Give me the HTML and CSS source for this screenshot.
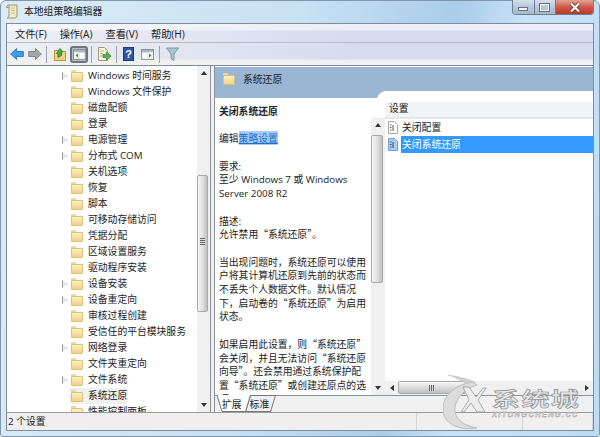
FILE: index.html
```html
<!DOCTYPE html>
<html lang="zh-CN">
<head>
    <meta charset="UTF-8">
    <title>本地组策略编辑器</title>
    <link rel="stylesheet" href="styles.css">
</head>
<body>
    <div class="window">
        <!-- Title bar -->
        <div class="titlebar">
            <svg class="app-icon" width="12" height="15" viewBox="0 0 12 15"><path d="M3 1h8v10c0 1.500-1 3-2 3H1c1 0 2-1 2-3z" fill="#f1e9cc" stroke="#a3956a"/><path d="M3 1C1.500 1 .5 2 .5 3.500H3" fill="#d8cfa8" stroke="#a3956a"/><path d="M5 4h4M5 6.500h4M5 9h4" stroke="#c9bc90"/></svg>
            <span class="title">本地组策略编辑器</span>
            <div class="caption-btns">
                <div class="cap cap-min"><i></i></div>
                <div class="cap cap-max"><i></i></div>
                <div class="cap cap-close">
                    <svg width="14" height="11" viewBox="0 0 14 11"><path d="M3 1.500l8 8M11 1.500l-8 8" stroke="#5a2a20" stroke-width="3.600"/><path d="M3 1.500l8 8M11 1.500l-8 8" stroke="#fff" stroke-width="2.200"/></svg>
                </div>
            </div>
        </div>

        <div class="client">
            <!-- Menu -->
            <div class="menubar">
                <span>文件(F)</span>
                <span>操作(A)</span>
                <span>查看(V)</span>
                <span>帮助(H)</span>
            </div>

            <!-- Toolbar -->
            <div class="toolbar">
                <svg class="tool" width="14" height="14" viewBox="0 0 14 14"><path d="M.7 7L6.500 1.500V4.500H13.300V9.500H6.500V12.500z" fill="#3f9fe6" stroke="#2a7fc4"/></svg>
                <svg class="tool tool-fwd" width="14" height="14" viewBox="0 0 14 14"><path d="M13.300 7L7.500 1.500V4.500H.7V9.500H7.500V12.500z" fill="#a3a7a6" stroke="#85898a"/></svg>
                <b class="sep"></b>
                <svg class="tool tool-up" width="12" height="14" viewBox="0 0 12 14"><path d="M.5 3.500h4l1 1h6v9H.500z" fill="#f2d27a" stroke="#b9963f"/><path d="M4 10.500V6.500H2.500L6 1.500 9 5H7.500V8.500z" fill="#4aa84a" stroke="#2b7a2b" stroke-width=".8"/></svg>
                <div class="tool-on">
                    <svg width="13" height="11" viewBox="0 0 13 11"><rect x=".5" y=".5" width="12" height="10" fill="#f2f2f2" stroke="#8a8f96"/><rect x="1" y="1" width="11" height="2" fill="#aab6c4"/><rect x="6" y="3.500" width="6" height="6.500" fill="#fff" stroke="#c0c4c8" stroke-width=".6"/><path d="M2.500 6.500L5 4.500v4z" fill="#2f9e3f"/></svg>
                </div>
                <b class="sep"></b>
                <svg class="tool" width="13" height="14" viewBox="0 0 13 14"><path d="M.5.500h6l3 3v10H.500z" fill="#f8f4e2" stroke="#a39a78"/><path d="M2 4h4M2 6.500h3M2 9h3" stroke="#b5ad90"/><path d="M5 7.500h3.500V5L13 9l-4.500 4v-2.500H5z" fill="#57b04a" stroke="#34822c" stroke-width=".7"/></svg>
                <b class="sep"></b>
                <div class="help-icon">?</div>
                <svg class="tool tool-pane" width="13" height="11" viewBox="0 0 13 11"><rect x=".5" y=".5" width="12" height="10" fill="#f2f2f2" stroke="#8a8f96"/><rect x="1" y="1" width="11" height="2" fill="#aab6c4"/><rect x="1" y="3.500" width="6" height="6.500" fill="#fff" stroke="#c0c4c8" stroke-width=".6"/><path d="M10.500 6.500L8 4.500v4z" fill="#2f9e3f"/></svg>
                <b class="sep"></b>
                <svg class="tool" width="13" height="14" viewBox="0 0 13 14"><path d="M.5 1h12L8 7v6.500L5 11.500V7z" fill="#a9c3d3" stroke="#7f98a8"/></svg>
            </div>

            <!-- Main -->
            <div class="main">
                <div class="tree-pane">
                    <ul class="tree">
                        <li><i class="arrow"></i><div class="node"><i class="folder"></i><span>Windows 时间服务</span></div></li>
                        <li><i class="no-arrow"></i><div class="node"><i class="folder"></i><span>Windows 文件保护</span></div></li>
                        <li><i class="no-arrow"></i><div class="node"><i class="folder"></i><span>磁盘配额</span></div></li>
                        <li><i class="no-arrow"></i><div class="node"><i class="folder"></i><span>登录</span></div></li>
                        <li><i class="arrow"></i><div class="node"><i class="folder"></i><span>电源管理</span></div></li>
                        <li><i class="arrow"></i><div class="node"><i class="folder"></i><span>分布式 COM</span></div></li>
                        <li><i class="no-arrow"></i><div class="node"><i class="folder"></i><span>关机选项</span></div></li>
                        <li><i class="no-arrow"></i><div class="node"><i class="folder"></i><span>恢复</span></div></li>
                        <li><i class="no-arrow"></i><div class="node"><i class="folder"></i><span>脚本</span></div></li>
                        <li><i class="no-arrow"></i><div class="node"><i class="folder"></i><span>可移动存储访问</span></div></li>
                        <li><i class="no-arrow"></i><div class="node"><i class="folder"></i><span>凭据分配</span></div></li>
                        <li><i class="no-arrow"></i><div class="node"><i class="folder"></i><span>区域设置服务</span></div></li>
                        <li><i class="no-arrow"></i><div class="node"><i class="folder"></i><span>驱动程序安装</span></div></li>
                        <li><i class="arrow"></i><div class="node"><i class="folder"></i><span>设备安装</span></div></li>
                        <li><i class="arrow"></i><div class="node"><i class="folder"></i><span>设备重定向</span></div></li>
                        <li><i class="no-arrow"></i><div class="node"><i class="folder"></i><span>审核过程创建</span></div></li>
                        <li><i class="no-arrow"></i><div class="node"><i class="folder"></i><span>受信任的平台模块服务</span></div></li>
                        <li><i class="arrow"></i><div class="node"><i class="folder"></i><span>网络登录</span></div></li>
                        <li><i class="no-arrow"></i><div class="node"><i class="folder"></i><span>文件夹重定向</span></div></li>
                        <li><i class="arrow"></i><div class="node"><i class="folder"></i><span>文件系统</span></div></li>
                        <li><i class="no-arrow"></i><div class="node selected"><i class="folder"></i><span>系统还原</span></div></li>
                        <li><i class="no-arrow"></i><div class="node"><i class="folder"></i><span>性能控制面板</span></div></li>
                    </ul>
                    <div class="vscroll tree-scroll">
                        <div class="sb-btn"><i class="tri-up"></i></div>
                        <div class="sb-track"><div class="sb-thumb tree-thumb"></div></div>
                        <div class="sb-btn"><i class="tri-down"></i></div>
                    </div>
                </div>

                <div class="right-pane">
                    <div class="right-head">
                        <i class="folder"></i>
                        <span>系统还原</span>
                    </div>
                    <div class="right-body">
                        <div class="desc-col">
                            <div class="desc">
                                <p class="zh"><b>关闭系统还原</b></p>
                                <p class="zh">编辑<a class="link">策略设置</a></p>
                                <p>要求:<br>至少 Windows 7 或 Windows Server 2008 R2</p>
                                <p class="zh">描述:<br>允许禁用“系统还原”。</p>
                                <p class="zh">当出现问题时，系统还原可以使用户将其计算机还原到先前的状态而不丢失个人数据文件。默认情况下，启动卷的“系统还原”为启用状态。</p>
                                <p class="zh">如果启用此设置，则“系统还原”会关闭，并且无法访问“系统还原向导”。还会禁用通过系统保护配置“系统还原”或创建还原点的选项。</p>
                            </div>
                            <div class="vscroll desc-scroll">
                                <div class="sb-btn"><i class="tri-up"></i></div>
                                <div class="sb-track"><div class="sb-thumb desc-thumb"></div></div>
                                <div class="sb-btn"><i class="tri-down"></i></div>
                            </div>
                        </div>
                        <div class="list-col">
                            <div class="list-head">设置</div>
                            <div class="list-row">
                                <svg class="doc" width="10" height="13" viewBox="0 0 10 13"><path d="M.5.500h6l3 3v9H.500z" fill="#fff" stroke="#a8a8a8"/><path d="M2 4h1.500M2 6.500h1.500M2 9h1.500M5 4v6" stroke="#555"/></svg>
                                <span>关闭配置</span>
                            </div>
                            <div class="list-row active">
                                <svg class="doc" width="10" height="13" viewBox="0 0 10 13"><path d="M.5.500h6l3 3v9H.500z" fill="#a9cdf2" stroke="#6d9fd1"/><path d="M2 4h1.500M2 6.500h1.500M2 9h1.500M5 4v6" stroke="#345"/></svg>
                                <span>关闭系统还原</span>
                            </div>
                            <div class="hscroll">
                                <div class="sb-btn"><i class="tri-left"></i></div>
                                <div class="sb-track-h"><div class="sb-thumb-h"></div></div>
                                <div class="sb-btn"><i class="tri-right"></i></div>
                            </div>
                        </div>
                    </div>
                    <div class="tabs">
                        <svg class="tab-shape" width="70" height="18" viewBox="0 0 70 18"><path d="M35.500 .5H60.500L55.500 16.500H30.500z" fill="#f0f0f0" stroke="#777"/><path d="M2 0L7 16.500H30.500L35.500 0z" fill="#fff"/><path d="M2 0L7 16.500H30.500L35.500 0" fill="none" stroke="#777"/></svg>
                        <span class="tab">扩展</span>
                        <span class="tab">标准</span>
                    </div>
                </div>
            </div>

            <!-- Status bar -->
            <div class="statusbar">
                <span class="st st-first">2 个设置</span>
                <span class="st st-mid"></span>
                <span class="st"></span>
            </div>
        </div>

        <!-- Watermark -->
        <div class="watermark">
            <svg class="wm-logo" width="48" height="60" viewBox="0 0 48 60"><path d="M5 2C12 4 20 8 26 13L32 9C22 5 12 3 5 2z" fill="#cfcfcf" stroke="#bbb" stroke-width=".5"/><path d="M30 9C10 12 0 24 0 36 0 50 14 58 34 55 18 52 11 44 12 35 13 24 22 16 34 12z" fill="#dcdcdc" stroke="#bdbdbd"/><path d="M20 14h6l7 10 7-9h3L35 27 42 39h-8L28 30 21 39h-3L26 27z" fill="#ececec" stroke="#999" stroke-width=".8"/></svg>
            <div class="wm-text">
                <div class="wm-cn">系统城</div>
                <div class="wm-en">XITONGCHENG.CC</div>
            </div>
        </div>
    </div>
</body>
</html>
```

FILE: styles.css
```css
* { margin: 0; padding: 0; box-sizing: border-box; }
html, body { width: 600px; height: 437px; overflow: hidden; background: #fff; }
body { font-family: "Open Sans", "Noto Sans CJK SC", sans-serif; font-size: 9.8px; color: #222; }
ul { list-style: none; }
i { font-style: normal; display: block; flex: none; }
.zh { font-family: "Noto Sans CJK SC", sans-serif; }

.window {
    position: relative;
    width: 600px;
    height: 437px;
    padding: 0 5px 5px 5px;
    display: flex;
    flex-direction: column;
    border: 1px solid #7f97ac;
    border-radius: 6px 6px 3px 3px;
    background: linear-gradient(100deg, #dcecf7 0%, #c8e1f3 45%, #a9cdea 68%, #c8e2f6 78%, #bcdcf4 100%);
}

/* title bar */
.titlebar { height: 22px; display: flex; align-items: center; flex: none; font-family: "Noto Sans CJK SC", sans-serif; }
.app-icon { margin: -2px 6px 0 0; flex: none; }
.title { font-size: 9.8px; margin-top: -2px; color: #222; }
.caption-btns { margin-left: auto; align-self: flex-start; display: flex; height: 15px; margin-top: -1px; border: 1px solid #6c7e90; border-top: 0; border-radius: 0 0 4px 4px; overflow: hidden; }
.cap { height: 100%; display: flex; align-items: center; justify-content: center; }
.cap-min, .cap-max { width: 21.500px; background: linear-gradient(#d4e0ec, #b7c8d9 50%, #a5b8ca); border-right: 1px solid #6c7e90; }
.cap-min i { width: 10px; height: 4px; margin-top: 4px; background: #f2f5f8; border: 1px solid #66727e; }
.cap-max i { width: 11px; height: 9px; border: 2px solid #eef2f6; outline: 1px solid #66727e; outline-offset: -1px; }
.cap-close { width: 37px; background: linear-gradient(#e2a196, #cf5a49 50%, #b8382a); }

.client {
    flex: 1;
    min-height: 0;
    display: flex;
    flex-direction: column;
    border: 1px solid #7f8c99;
    background: #f0eeee;
}

/* menu and toolbar */
.menubar { height: 19px; flex: none; display: flex; gap: 13px; align-items: center; padding-left: 8px; border-bottom: 1px solid #b9bcc4; background: linear-gradient(rgba(255,255,255,.55) 0, rgba(255,255,255,.5) 6px, rgba(255,255,255,0) 7px), linear-gradient(90deg, #eeeff4, #d7dbee 60%); }
.menubar span { font-size: 10.2px; }
.toolbar { height: 23px; flex: none; display: flex; align-items: center; padding-left: 3px; border-bottom: 1px solid #7f8c99; background: linear-gradient(rgba(240,240,240,0) 16px, #f0f0f0 17px), linear-gradient(90deg, #eeeff4, #d7dbee 60%); }
.tool { flex: none; }
.tool-fwd { margin-left: 4px; margin-right: -1px; }
.tool-up { margin-left: 1px; }
.tool-pane { margin-left: 7px; }
.sep { width: 1px; height: 17px; margin: 0 6px 0 5px; background: #9ea3ad; flex: none; }
.tool-on { width: 18px; height: 17px; margin-left: 4px; margin-right: -2px; display: flex; align-items: center; justify-content: center; border: 2px solid #70757c; border-radius: 3px; background: #b9bdc9; flex: none; }
.help-icon { width: 11px; height: 14px; background: #2f55a8; border: 1px solid #1d3a7a; color: #fff; font: bold 11px/12px "Liberation Sans", sans-serif; text-align: center; flex: none; }

/* main split */
.main { flex: 1; min-height: 0; display: flex; background: #f0f0f0; }
.tree-pane { width: 204px; flex: none; display: flex; background: #fff; overflow: hidden; border-left: 0; }
.tree { flex: 1; min-width: 0; padding-top: 2px; padding-left: 55px; overflow: hidden; }
.tree li { height: 16px; display: flex; align-items: center; white-space: nowrap; }
.tree .arrow { width: 5px; height: 8px; background: #e9e9e9; clip-path: polygon(0 0, 100% 50%, 0 100%); box-shadow: inset 0 0 0 1px #999; }
.tree .no-arrow { width: 5px; }
.node { height: 16px; margin-left: 2px; padding: 0 1px 0 2px; display: flex; align-items: center; border-radius: 2px; }
.node span { margin-left: 5px; line-height: 16px; }
.node.selected { background: #f0f0f0; }

.folder { width: 12px; height: 10px; margin-top: 1px; border-radius: 1px; background: linear-gradient(#fdf0c0, #f2d488); border: 1px solid #dcc07a; position: relative; }
.folder::before { content: ""; position: absolute; left: -1px; top: -3px; width: 5px; height: 2px; background: #efd896; border-radius: 1px 1px 0 0; }

/* scrollbars */
.vscroll { width: 14px; flex: none; display: flex; flex-direction: column; background: #f0f0f0; }
.tree-scroll { border-right: 1px solid #8b929a; }
.sb-btn { width: 13px; height: 14px; flex: none; display: flex; align-items: center; justify-content: center; }
.sb-track { flex: 1; min-height: 0; }
.sb-thumb { position: relative; background: linear-gradient(90deg, #f6f6f6, #dcdcdc 60%, #bfbfbf); border: 1px solid #a9a9a9; border-radius: 2px; }
.tree-thumb { width: 11px; height: 137px; margin-top: 95px; }
.tree-thumb::after { content: ""; position: absolute; left: 2px; right: 2px; top: 62px; height: 7px; background: repeating-linear-gradient(#666 0, #666 1px, #ddd 1px, #ddd 2px); }
.desc-thumb { width: 12px; height: 148px; margin-top: 3px; }
.tri-up { border-left: 3px solid transparent; border-right: 3px solid transparent; border-bottom: 4px solid #333; }
.tri-down { border-left: 3px solid transparent; border-right: 3px solid transparent; border-top: 4px solid #333; }
.tri-left { border-top: 3px solid transparent; border-bottom: 3px solid transparent; border-right: 4px solid #333; }
.tri-right { border-top: 3px solid transparent; border-bottom: 3px solid transparent; border-left: 4px solid #333; }

/* right pane */
.right-pane { flex: 1; min-width: 0; margin-left: 3px; display: flex; flex-direction: column; border-left: 1px solid #8b929a; background: #fff; }
.right-head { height: 32px; flex: none; display: flex; align-items: center; gap: 8px; padding: 0 0 7px 8px; border-top: 1px solid #fff; background: #9ab5d3; font-family: "Noto Sans CJK SC", sans-serif; }
.right-head .folder { width: 12px; }
.right-body { flex: 1; min-height: 0; display: flex; background: #fff; }
.desc-col { width: 170px; flex: none; display: flex; background: #fff; }
.desc { flex: 1; min-width: 0; padding: 7px 3px 0 4px; line-height: 13.700px; overflow: hidden; }
.desc p { margin-bottom: 13.700px; }
.link { color: #1a6fd0; background: #a9cdf3; text-decoration: underline; }
.desc-scroll { margin-top: 20px; }

.list-col { position: relative; flex: 1; min-width: 0; display: flex; flex-direction: column; margin-top: -7px; background: #fff; font-family: "Noto Sans CJK SC", sans-serif; }
.list-col::before { content: ""; position: absolute; left: -8px; top: 0; width: 16px; height: 12px; background: #fff; border-radius: 9px 0 0 0; }
.list-head { position: relative; height: 17px; margin-top: 11px; flex: none; padding-left: 4px; line-height: 13px; background: #f2f3f6; border-bottom: 2px solid #e6e6e6; }
.list-row { height: 17px; flex: none; display: flex; align-items: center; padding-left: 3px; }
.doc { flex: none; }
.list-row span { flex: 1; margin-left: 3px; padding-left: 1px; line-height: 17px; }
.list-row.active span { background: #3399ff; color: #fff; }
.hscroll { margin-top: auto; height: 14px; flex: none; display: flex; background: #f0f0f0; }
.sb-track-h { flex: 1; min-width: 0; }
.sb-thumb-h { position: relative; width: 68px; height: 13px; background: linear-gradient(#f6f6f6, #d9d9d9 55%, #c0c0c0); border: 1px solid #a9a9a9; border-radius: 2px; }
.sb-thumb-h::after { content: ""; position: absolute; left: 30px; top: 3px; width: 6px; height: 6px; background: repeating-linear-gradient(90deg, #666 0, #666 1px, #ddd 1px, #ddd 2px); }

.tabs { position: relative; z-index: 1; height: 17px; flex: none; display: flex; gap: 8px; padding-left: 7px; background: #f0f0f0; border-top: 1px solid #8b929a; font-family: "Noto Sans CJK SC", sans-serif; }
.tab-shape { position: absolute; left: 0; top: -1px; }
.tab { position: relative; line-height: 16px; }

/* status */
.statusbar { height: 18px; flex: none; display: flex; background: #f0eeee; border-top: 1px solid #9a9a9a; line-height: 17px; }
.st { flex: 1; border-right: 1px solid #d5d2d2; padding-left: 1px; }
.st-first { flex: none; width: 410px; }
.st-mid { flex: none; width: 106px; }

/* overlay logo */
.watermark { position: absolute; z-index: 2; left: 442px; top: 372px; display: flex; }
.wm-logo { flex: none; }
.wm-text { margin-left: 1px; padding-top: 15px; }
.wm-cn { font-family: "Noto Sans CJK SC", sans-serif; font-size: 20px; line-height: 22px; font-weight: bold; letter-spacing: 1px; color: #e6e6e6; -webkit-text-stroke: .6px #8c8c8c; transform: scaleX(1.4); transform-origin: left; white-space: nowrap; }
.wm-en { font-family: "Liberation Sans", sans-serif; font-size: 7.500px; line-height: 9px; font-style: italic; font-weight: bold; letter-spacing: 1.300px; color: #e6e6e6; -webkit-text-stroke: .3px #888; white-space: nowrap; }
```
